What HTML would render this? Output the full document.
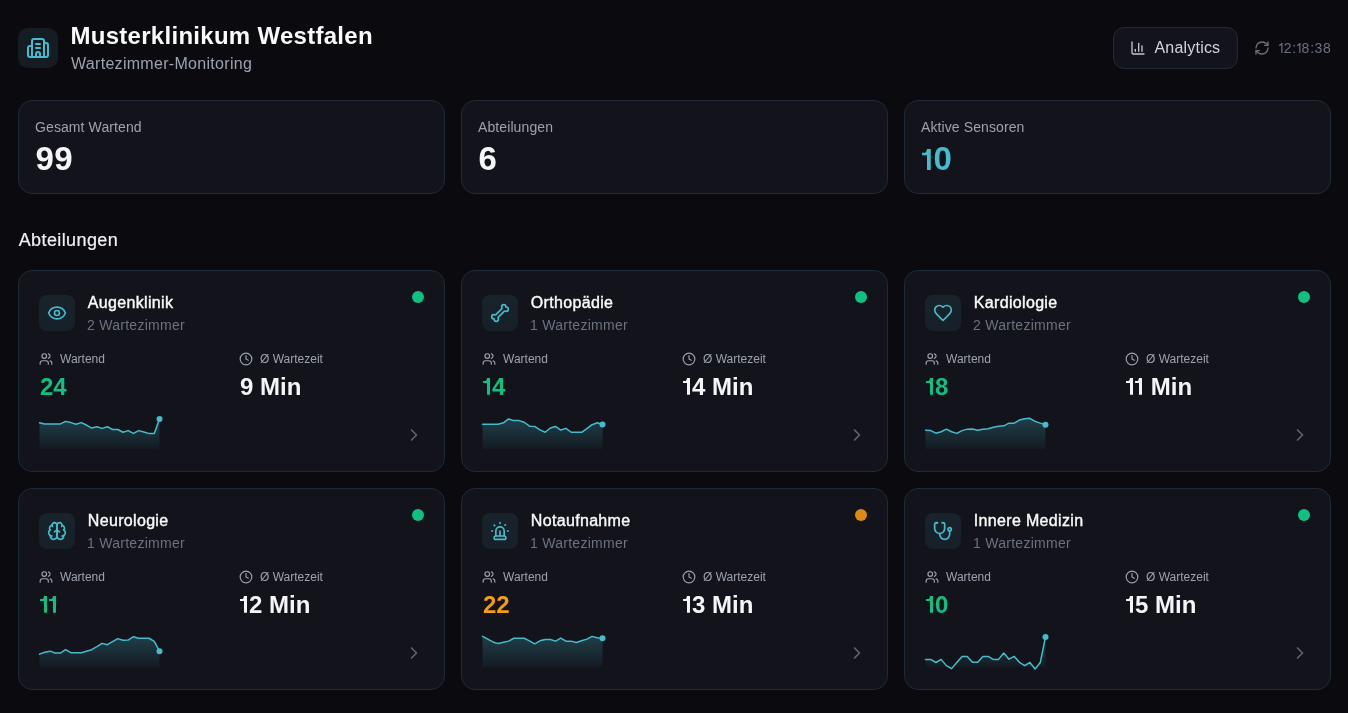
<!DOCTYPE html>
<html lang="de"><head><meta charset="utf-8"><title>Musterklinikum Westfalen</title>
<style>
*{box-sizing:border-box;margin:0;padding:0}
html,body{width:1348px;height:713px;overflow:hidden;background:#0a0a0f;font-family:"Liberation Sans",sans-serif;color:#f5f5f7}
.abs{position:absolute}
.logo{position:absolute;left:18px;top:28px;width:40px;height:40px;border-radius:10px;background:#161c24;display:flex;align-items:center;justify-content:center}
.title{position:absolute;left:70.5px;top:21.6px;font-size:24px;line-height:28px;font-weight:700;letter-spacing:0.28px;white-space:nowrap;color:#fafafa}
.subtitle{position:absolute;left:71px;top:54px;font-size:16px;line-height:20px;letter-spacing:0.3px;white-space:nowrap;color:#9ca3af}
.btn{position:absolute;left:1113px;top:27px;width:125px;height:42px;border:1px solid #1d2b39;border-radius:11px;background:#12131b}
.btn svg{position:absolute;left:16px;top:12px}
.btn span{position:absolute;left:40.5px;top:10px;font-size:16px;line-height:20px;letter-spacing:0.2px;color:#d1d5db;white-space:nowrap}
.refresh{position:absolute;left:1254px;top:40px}
.tch{position:absolute;top:0;width:10px;text-align:center}
.time{position:absolute;left:1279px;top:37.5px;width:60px;height:20px;font-size:14px;line-height:20px;color:#6b7280;white-space:nowrap}
.stat{position:absolute;top:100px;width:427px;height:94px;border:1px solid #1d2b39;border-radius:14px;background:#12131b}
.slab{position:absolute;left:16px;top:16px;font-size:14px;line-height:20px;letter-spacing:0.1px;color:#9ca3af;white-space:nowrap}
.sval{position:absolute;left:16.5px;top:39px;font-size:33px;line-height:38px;letter-spacing:0.5px;font-weight:700;white-space:nowrap}
.sect{position:absolute;left:18.7px;top:228.2px;font-size:18px;line-height:24px;letter-spacing:0.4px;color:#f1f1f3;-webkit-text-stroke:0.2px #f1f1f3;white-space:nowrap}
.dept{position:absolute;width:427px;height:202px;border:1px solid #1d2b39;border-radius:14px;background:#12131b}
.ibox{position:absolute;left:20px;top:24px;width:36px;height:36px;border-radius:8px;background:linear-gradient(180deg,#19232c,#172028);display:flex;align-items:center;justify-content:center}
.dtitle{position:absolute;left:68.8px;top:22px;font-size:16px;line-height:20px;font-weight:400;-webkit-text-stroke:0.4px #fafafa;letter-spacing:0.33px;white-space:nowrap;color:#fafafa}
.dsub{position:absolute;left:68px;top:44px;font-size:14px;line-height:20px;letter-spacing:0.27px;color:#6b7280;white-space:nowrap}
.mlab svg{margin-left:-1px}
.dot{position:absolute;left:393px;top:20px;width:12px;height:12px;border-radius:50%}
.mlab{position:absolute;top:80px;height:16px;display:flex;align-items:center;gap:7px;font-size:12px;color:#9ca3af;white-space:nowrap}
.mval{position:absolute;top:100px;font-size:24px;line-height:32px;font-weight:700;white-space:nowrap}
.spark{position:absolute;left:18.7px;top:139px;overflow:visible}
.chev{position:absolute;left:385px;top:154px;width:20px;height:20px}
.chev svg{display:block}
#wrap{position:absolute;left:0;top:0;width:1348px;height:713px;will-change:transform}
</style></head><body><div id="wrap">
<div class="logo"><svg width="24" height="24" viewBox="0 0 24 24" fill="none" stroke="#45bccc" stroke-width="2" stroke-linecap="round" stroke-linejoin="round" ><path d="M10 12h4"/><path d="M10 8h4"/><path d="M14 21v-3a2 2 0 0 0-4 0v3"/><path d="M6 10H4a2 2 0 0 0-2 2v7a2 2 0 0 0 2 2h16a2 2 0 0 0 2-2V9a2 2 0 0 0-2-2h-2"/><path d="M6 21V5a2 2 0 0 1 2-2h8a2 2 0 0 1 2 2v16"/></svg></div>
<div class="title">Musterklinikum Westfalen</div>
<div class="subtitle">Wartezimmer-Monitoring</div>
<div class="btn"><svg width="16" height="16" viewBox="0 0 24 24" fill="none" stroke="#c4c8d0" stroke-width="2" stroke-linecap="round" stroke-linejoin="round" ><path d="M3 3v16a2 2 0 0 0 2 2h16"/><path d="M18 17V9"/><path d="M13 17V5"/><path d="M8 17v-3"/></svg><span>Analytics</span></div>
<div class="refresh"><svg width="16" height="16" viewBox="0 0 24 24" fill="none" stroke="#6b7280" stroke-width="2" stroke-linecap="round" stroke-linejoin="round" ><path d="M3 12a9 9 0 0 1 9-9 9.75 9.75 0 0 1 6.74 2.74L21 8"/><path d="M21 3v5h-5"/><path d="M21 12a9 9 0 0 1-9 9 9.75 9.75 0 0 1-6.74-2.74L3 16"/><path d="M8 16H3v5"/></svg></div>
<div class="time"><span class="tch" style="left:-3.3px"><svg width="4" height="10" viewBox="0 0 4 10" style="vertical-align:0;margin-left:0.3px"><path d="M2.25,0 H3.45 V10 H2.25 V1.9 Q1.5,2.7 0.1,3 V1.85 Q1.6,1.5 2.3,0 Z" fill="currentColor"/></svg></span><span class="tch" style="left:3.7px">2</span><span class="tch" style="left:10.1px">:</span><span class="tch" style="left:14.5px"><svg width="4" height="10" viewBox="0 0 4 10" style="vertical-align:0;margin-left:0.3px"><path d="M2.25,0 H3.45 V10 H2.25 V1.9 Q1.5,2.7 0.1,3 V1.85 Q1.6,1.5 2.3,0 Z" fill="currentColor"/></svg></span><span class="tch" style="left:21.4px">8</span><span class="tch" style="left:28.1px">:</span><span class="tch" style="left:34.4px">3</span><span class="tch" style="left:42.9px">8</span></div>

<div class="stat" style="left:18px">
  <div class="slab">Gesamt Wartend</div>
  <div class="sval" style="color:#f5f5f7">99</div>
</div>
<div class="stat" style="left:461px">
  <div class="slab">Abteilungen</div>
  <div class="sval" style="color:#f5f5f7">6</div>
</div>
<div class="stat" style="left:904px">
  <div class="slab">Aktive Sensoren</div>
  <div class="sval" style="color:#45bccc"><svg class="one" width="12" height="20.88" viewBox="0 0 9.6 16.7" style="vertical-align:0;margin-left:-0px"><path d="M4,0 H7 V16.7 H4 V4.9 H0.3 Q0,4.9 0,4.6 V3.2 Q0,2.9 0.3,2.9 H2.7 Q3.7,2.4 4,0 Z" fill="currentColor"/></svg>0</div>
</div>
<div class="sect">Abteilungen</div>

<div class="dept" style="left:18px;top:270px">
  <div class="ibox"><svg width="20" height="20" viewBox="0 0 24 24" fill="none" stroke="#45bccc" stroke-width="2" stroke-linecap="round" stroke-linejoin="round" ><path d="M2.062 12.348a1 1 0 0 1 0-.696 10.75 10.75 0 0 1 19.876 0 1 1 0 0 1 0 .696 10.75 10.75 0 0 1-19.876 0"/><circle cx="12" cy="12" r="3"/></svg></div>
  <div class="dtitle">Augenklinik</div>
  <div class="dsub">2 Wartezimmer</div>
  <div class="dot" style="background:#10c081"></div>
  <div class="mlab" style="left:21px"><svg width="14" height="14" viewBox="0 0 24 24" fill="none" stroke="#9ca3af" stroke-width="2" stroke-linecap="round" stroke-linejoin="round" ><path d="M16 21v-2a4 4 0 0 0-4-4H6a4 4 0 0 0-4 4v2"/><circle cx="9" cy="7" r="4"/><path d="M22 21v-2a4 4 0 0 0-3-3.87"/><path d="M16 3.13a4 4 0 0 1 0 7.75"/></svg><span>Wartend</span></div>
  <div class="mlab" style="left:221px"><svg width="14" height="14" viewBox="0 0 24 24" fill="none" stroke="#9ca3af" stroke-width="2" stroke-linecap="round" stroke-linejoin="round" ><circle cx="12" cy="12" r="10"/><polyline points="12 6 12 12 16 14"/></svg><span>Ø Wartezeit</span></div>
  <div class="mval" style="left:21px;color:#10c081">24</div>
  <div class="mval" style="left:221px;color:#f5f5f7">9 Min</div>
  <svg class="spark" width="126" height="44" viewBox="0 0 126 44"><defs><linearGradient id="g0" x1="0" y1="8.92" x2="0" y2="39.3" gradientUnits="userSpaceOnUse"><stop offset="0" stop-color="#45bccc" stop-opacity="0.26"/><stop offset="1" stop-color="#45bccc" stop-opacity="0.04"/></linearGradient></defs><path d="M1.5,39.3 L1.5,12.81 L6.72,13.92 L11.93,13.92 L17.15,13.92 L22.37,13.92 L27.59,11.36 L32.8,12.59 L38.02,14.26 L43.24,12.59 L48.46,15.04 L53.67,18.04 L58.89,16.71 L64.11,18.37 L69.33,16.71 L74.54,19.49 L79.76,19.49 L84.98,22.27 L90.2,20.6 L95.41,23.38 L100.63,20.6 L105.85,22.05 L111.07,23.6 L116.28,23.38 L121.5,8.92 L121.5,39.3 Z" fill="url(#g0)"/><polyline points="1.5,12.81 6.72,13.92 11.93,13.92 17.15,13.92 22.37,13.92 27.59,11.36 32.8,12.59 38.02,14.26 43.24,12.59 48.46,15.04 53.67,18.04 58.89,16.71 64.11,18.37 69.33,16.71 74.54,19.49 79.76,19.49 84.98,22.27 90.2,20.6 95.41,23.38 100.63,20.6 105.85,22.05 111.07,23.6 116.28,23.38 121.5,8.92" fill="none" stroke="#45bccc" stroke-width="1.5" stroke-linejoin="round" stroke-linecap="round"/><circle cx="121.5" cy="8.92" r="3" fill="#45bccc"/></svg>
  <div class="chev"><svg width="20" height="20" viewBox="0 0 24 24" fill="none" stroke="#5f6570" stroke-width="2" stroke-linecap="round" stroke-linejoin="round" ><path d="m9 18 6-6-6-6"/></svg></div>
</div>
<div class="dept" style="left:461px;top:270px">
  <div class="ibox"><svg width="20" height="20" viewBox="0 0 24 24" fill="none" stroke="#45bccc" stroke-width="2" stroke-linecap="round" stroke-linejoin="round" ><path d="M17 10c.7-.7 1.69 0 2.5 0a2.5 2.5 0 1 0 0-5 .5.5 0 0 1-.5-.5 2.5 2.5 0 1 0-5 0c0 .81.7 1.8 0 2.5l-7 7c-.7.7-1.69 0-2.5 0a2.5 2.5 0 0 0 0 5c.28 0 .5.22.5.5a2.5 2.5 0 1 0 5 0c0-.81-.7-1.8 0-2.5Z"/></svg></div>
  <div class="dtitle">Orthopädie</div>
  <div class="dsub">1 Wartezimmer</div>
  <div class="dot" style="background:#10c081"></div>
  <div class="mlab" style="left:21px"><svg width="14" height="14" viewBox="0 0 24 24" fill="none" stroke="#9ca3af" stroke-width="2" stroke-linecap="round" stroke-linejoin="round" ><path d="M16 21v-2a4 4 0 0 0-4-4H6a4 4 0 0 0-4 4v2"/><circle cx="9" cy="7" r="4"/><path d="M22 21v-2a4 4 0 0 0-3-3.87"/><path d="M16 3.13a4 4 0 0 1 0 7.75"/></svg><span>Wartend</span></div>
  <div class="mlab" style="left:221px"><svg width="14" height="14" viewBox="0 0 24 24" fill="none" stroke="#9ca3af" stroke-width="2" stroke-linecap="round" stroke-linejoin="round" ><circle cx="12" cy="12" r="10"/><polyline points="12 6 12 12 16 14"/></svg><span>Ø Wartezeit</span></div>
  <div class="mval" style="left:21px;color:#10c081"><svg class="one" width="9.1" height="16.7" viewBox="0 0 9.1 16.7" style="vertical-align:0;margin-left:-0px"><path d="M4,0 H7 V16.7 H4 V4.9 H0.3 Q0,4.9 0,4.6 V3.2 Q0,2.9 0.3,2.9 H2.7 Q3.7,2.4 4,0 Z" fill="currentColor"/></svg>4</div>
  <div class="mval" style="left:221px;color:#f5f5f7"><svg class="one" width="9.1" height="16.7" viewBox="0 0 9.1 16.7" style="vertical-align:0;margin-left:-0px"><path d="M4,0 H7 V16.7 H4 V4.9 H0.3 Q0,4.9 0,4.6 V3.2 Q0,2.9 0.3,2.9 H2.7 Q3.7,2.4 4,0 Z" fill="currentColor"/></svg>4 Min</div>
  <svg class="spark" width="126" height="44" viewBox="0 0 126 44"><defs><linearGradient id="g1" x1="0" y1="8.92" x2="0" y2="39.3" gradientUnits="userSpaceOnUse"><stop offset="0" stop-color="#45bccc" stop-opacity="0.26"/><stop offset="1" stop-color="#45bccc" stop-opacity="0.04"/></linearGradient></defs><path d="M1.5,39.3 L1.5,14.26 L6.72,14.26 L11.93,14.26 L17.15,14.26 L22.37,12.81 L27.59,8.92 L32.8,10.59 L38.02,10.59 L43.24,12.25 L48.46,16.15 L53.67,16.48 L58.89,19.82 L64.11,22.27 L69.33,18.04 L74.54,16.48 L79.76,20.04 L84.98,18.37 L90.2,22.27 L95.41,22.27 L100.63,22.27 L105.85,18.71 L111.07,14.7 L116.28,12.81 L121.5,14.48 L121.5,39.3 Z" fill="url(#g1)"/><polyline points="1.5,14.26 6.72,14.26 11.93,14.26 17.15,14.26 22.37,12.81 27.59,8.92 32.8,10.59 38.02,10.59 43.24,12.25 48.46,16.15 53.67,16.48 58.89,19.82 64.11,22.27 69.33,18.04 74.54,16.48 79.76,20.04 84.98,18.37 90.2,22.27 95.41,22.27 100.63,22.27 105.85,18.71 111.07,14.7 116.28,12.81 121.5,14.48" fill="none" stroke="#45bccc" stroke-width="1.5" stroke-linejoin="round" stroke-linecap="round"/><circle cx="121.5" cy="14.48" r="3" fill="#45bccc"/></svg>
  <div class="chev"><svg width="20" height="20" viewBox="0 0 24 24" fill="none" stroke="#5f6570" stroke-width="2" stroke-linecap="round" stroke-linejoin="round" ><path d="m9 18 6-6-6-6"/></svg></div>
</div>
<div class="dept" style="left:904px;top:270px">
  <div class="ibox"><svg width="20" height="20" viewBox="0 0 24 24" fill="none" stroke="#45bccc" stroke-width="2" stroke-linecap="round" stroke-linejoin="round" ><path d="M19 14c1.49-1.46 3-3.21 3-5.5A5.5 5.5 0 0 0 16.5 3c-1.76 0-3 .5-4.5 2-1.5-1.5-2.74-2-4.5-2A5.5 5.5 0 0 0 2 8.5c0 2.3 1.5 4.05 3 5.5l7 7Z"/></svg></div>
  <div class="dtitle">Kardiologie</div>
  <div class="dsub">2 Wartezimmer</div>
  <div class="dot" style="background:#10c081"></div>
  <div class="mlab" style="left:21px"><svg width="14" height="14" viewBox="0 0 24 24" fill="none" stroke="#9ca3af" stroke-width="2" stroke-linecap="round" stroke-linejoin="round" ><path d="M16 21v-2a4 4 0 0 0-4-4H6a4 4 0 0 0-4 4v2"/><circle cx="9" cy="7" r="4"/><path d="M22 21v-2a4 4 0 0 0-3-3.87"/><path d="M16 3.13a4 4 0 0 1 0 7.75"/></svg><span>Wartend</span></div>
  <div class="mlab" style="left:221px"><svg width="14" height="14" viewBox="0 0 24 24" fill="none" stroke="#9ca3af" stroke-width="2" stroke-linecap="round" stroke-linejoin="round" ><circle cx="12" cy="12" r="10"/><polyline points="12 6 12 12 16 14"/></svg><span>Ø Wartezeit</span></div>
  <div class="mval" style="left:21px;color:#10c081"><svg class="one" width="9.1" height="16.7" viewBox="0 0 9.1 16.7" style="vertical-align:0;margin-left:-0px"><path d="M4,0 H7 V16.7 H4 V4.9 H0.3 Q0,4.9 0,4.6 V3.2 Q0,2.9 0.3,2.9 H2.7 Q3.7,2.4 4,0 Z" fill="currentColor"/></svg>8</div>
  <div class="mval" style="left:221px;color:#f5f5f7"><svg class="one" width="9.1" height="16.7" viewBox="0 0 9.1 16.7" style="vertical-align:0;margin-left:-0px"><path d="M4,0 H7 V16.7 H4 V4.9 H0.3 Q0,4.9 0,4.6 V3.2 Q0,2.9 0.3,2.9 H2.7 Q3.7,2.4 4,0 Z" fill="currentColor"/></svg><svg class="one" width="9.1" height="16.7" viewBox="0 0 9.1 16.7" style="vertical-align:0;margin-left:-0px"><path d="M4,0 H7 V16.7 H4 V4.9 H0.3 Q0,4.9 0,4.6 V3.2 Q0,2.9 0.3,2.9 H2.7 Q3.7,2.4 4,0 Z" fill="currentColor"/></svg> Min</div>
  <svg class="spark" width="126" height="44" viewBox="0 0 126 44"><defs><linearGradient id="g2" x1="0" y1="8.36" x2="0" y2="39.3" gradientUnits="userSpaceOnUse"><stop offset="0" stop-color="#45bccc" stop-opacity="0.26"/><stop offset="1" stop-color="#45bccc" stop-opacity="0.04"/></linearGradient></defs><path d="M1.5,39.3 L1.5,20.27 L6.72,20.6 L11.93,23.16 L17.15,21.71 L22.37,19.15 L27.59,21.71 L32.8,23.38 L38.02,20.6 L43.24,19.15 L48.46,18.93 L53.67,20.27 L58.89,19.15 L64.11,18.71 L69.33,17.26 L74.54,16.15 L79.76,15.82 L84.98,13.14 L90.2,13.14 L95.41,10.03 L100.63,8.69 L105.85,8.36 L111.07,11.36 L116.28,13.14 L121.5,14.7 L121.5,39.3 Z" fill="url(#g2)"/><polyline points="1.5,20.27 6.72,20.6 11.93,23.16 17.15,21.71 22.37,19.15 27.59,21.71 32.8,23.38 38.02,20.6 43.24,19.15 48.46,18.93 53.67,20.27 58.89,19.15 64.11,18.71 69.33,17.26 74.54,16.15 79.76,15.82 84.98,13.14 90.2,13.14 95.41,10.03 100.63,8.69 105.85,8.36 111.07,11.36 116.28,13.14 121.5,14.7" fill="none" stroke="#45bccc" stroke-width="1.5" stroke-linejoin="round" stroke-linecap="round"/><circle cx="121.5" cy="14.7" r="3" fill="#45bccc"/></svg>
  <div class="chev"><svg width="20" height="20" viewBox="0 0 24 24" fill="none" stroke="#5f6570" stroke-width="2" stroke-linecap="round" stroke-linejoin="round" ><path d="m9 18 6-6-6-6"/></svg></div>
</div>
<div class="dept" style="left:18px;top:488px">
  <div class="ibox"><svg width="20" height="20" viewBox="0 0 24 24" fill="none" stroke="#45bccc" stroke-width="2" stroke-linecap="round" stroke-linejoin="round" ><path d="M12 5a3 3 0 1 0-5.997.125 4 4 0 0 0-2.526 5.77 4 4 0 0 0 .556 6.588A4 4 0 1 0 12 18Z"/><path d="M12 5a3 3 0 1 1 5.997.125 4 4 0 0 1 2.526 5.77 4 4 0 0 1-.556 6.588A4 4 0 1 1 12 18Z"/><path d="M15 13a4.5 4.5 0 0 1-3-4 4.5 4.5 0 0 1-3 4"/><path d="M17.599 6.5a3 3 0 0 0 .399-1.375"/><path d="M6.003 5.125A3 3 0 0 0 6.401 6.5"/><path d="M3.477 10.896a4 4 0 0 1 .585-.396"/><path d="M19.938 10.5a4 4 0 0 1 .585.396"/><path d="M6 18a4 4 0 0 1-1.967-.516"/><path d="M19.967 17.484A4 4 0 0 1 18 18"/></svg></div>
  <div class="dtitle">Neurologie</div>
  <div class="dsub">1 Wartezimmer</div>
  <div class="dot" style="background:#10c081"></div>
  <div class="mlab" style="left:21px"><svg width="14" height="14" viewBox="0 0 24 24" fill="none" stroke="#9ca3af" stroke-width="2" stroke-linecap="round" stroke-linejoin="round" ><path d="M16 21v-2a4 4 0 0 0-4-4H6a4 4 0 0 0-4 4v2"/><circle cx="9" cy="7" r="4"/><path d="M22 21v-2a4 4 0 0 0-3-3.87"/><path d="M16 3.13a4 4 0 0 1 0 7.75"/></svg><span>Wartend</span></div>
  <div class="mlab" style="left:221px"><svg width="14" height="14" viewBox="0 0 24 24" fill="none" stroke="#9ca3af" stroke-width="2" stroke-linecap="round" stroke-linejoin="round" ><circle cx="12" cy="12" r="10"/><polyline points="12 6 12 12 16 14"/></svg><span>Ø Wartezeit</span></div>
  <div class="mval" style="left:21px;color:#10c081"><svg class="one" width="9.1" height="16.7" viewBox="0 0 9.1 16.7" style="vertical-align:0;margin-left:-0px"><path d="M4,0 H7 V16.7 H4 V4.9 H0.3 Q0,4.9 0,4.6 V3.2 Q0,2.9 0.3,2.9 H2.7 Q3.7,2.4 4,0 Z" fill="currentColor"/></svg><svg class="one" width="9.1" height="16.7" viewBox="0 0 9.1 16.7" style="vertical-align:0;margin-left:-0px"><path d="M4,0 H7 V16.7 H4 V4.9 H0.3 Q0,4.9 0,4.6 V3.2 Q0,2.9 0.3,2.9 H2.7 Q3.7,2.4 4,0 Z" fill="currentColor"/></svg></div>
  <div class="mval" style="left:221px;color:#f5f5f7"><svg class="one" width="9.1" height="16.7" viewBox="0 0 9.1 16.7" style="vertical-align:0;margin-left:-0px"><path d="M4,0 H7 V16.7 H4 V4.9 H0.3 Q0,4.9 0,4.6 V3.2 Q0,2.9 0.3,2.9 H2.7 Q3.7,2.4 4,0 Z" fill="currentColor"/></svg>2 Min</div>
  <svg class="spark" width="126" height="44" viewBox="0 0 126 44"><defs><linearGradient id="g3" x1="0" y1="8.69" x2="0" y2="39.3" gradientUnits="userSpaceOnUse"><stop offset="0" stop-color="#45bccc" stop-opacity="0.26"/><stop offset="1" stop-color="#45bccc" stop-opacity="0.04"/></linearGradient></defs><path d="M1.5,39.3 L1.5,26.16 L6.72,24.27 L11.93,23.16 L17.15,25.05 L22.37,25.05 L27.59,21.71 L32.8,24.72 L38.02,24.72 L43.24,24.72 L48.46,23.16 L53.67,21.71 L58.89,18.71 L64.11,15.37 L69.33,16.71 L74.54,13.59 L79.76,10.59 L84.98,12.25 L90.2,12.03 L95.41,8.69 L100.63,10.25 L105.85,10.25 L111.07,10.25 L116.28,13.37 L121.5,23.16 L121.5,39.3 Z" fill="url(#g3)"/><polyline points="1.5,26.16 6.72,24.27 11.93,23.16 17.15,25.05 22.37,25.05 27.59,21.71 32.8,24.72 38.02,24.72 43.24,24.72 48.46,23.16 53.67,21.71 58.89,18.71 64.11,15.37 69.33,16.71 74.54,13.59 79.76,10.59 84.98,12.25 90.2,12.03 95.41,8.69 100.63,10.25 105.85,10.25 111.07,10.25 116.28,13.37 121.5,23.16" fill="none" stroke="#45bccc" stroke-width="1.5" stroke-linejoin="round" stroke-linecap="round"/><circle cx="121.5" cy="23.16" r="3" fill="#45bccc"/></svg>
  <div class="chev"><svg width="20" height="20" viewBox="0 0 24 24" fill="none" stroke="#5f6570" stroke-width="2" stroke-linecap="round" stroke-linejoin="round" ><path d="m9 18 6-6-6-6"/></svg></div>
</div>
<div class="dept" style="left:461px;top:488px">
  <div class="ibox"><svg width="20" height="20" viewBox="0 0 24 24" fill="none" stroke="#45bccc" stroke-width="2" stroke-linecap="round" stroke-linejoin="round" ><path d="M7 18v-6a5 5 0 1 1 10 0v6"/><path d="M5 21a1 1 0 0 0 1 1h12a1 1 0 0 0 1-1v-1a2 2 0 0 0-2-2H7a2 2 0 0 0-2 2z"/><path d="M21 12h1"/><path d="M18.5 4.5 18 5"/><path d="M2 12h1"/><path d="M12 2v1"/><path d="m4.929 4.929.707.707"/><path d="M12 12v6"/></svg></div>
  <div class="dtitle">Notaufnahme</div>
  <div class="dsub">1 Wartezimmer</div>
  <div class="dot" style="background:#dc8a12"></div>
  <div class="mlab" style="left:21px"><svg width="14" height="14" viewBox="0 0 24 24" fill="none" stroke="#9ca3af" stroke-width="2" stroke-linecap="round" stroke-linejoin="round" ><path d="M16 21v-2a4 4 0 0 0-4-4H6a4 4 0 0 0-4 4v2"/><circle cx="9" cy="7" r="4"/><path d="M22 21v-2a4 4 0 0 0-3-3.87"/><path d="M16 3.13a4 4 0 0 1 0 7.75"/></svg><span>Wartend</span></div>
  <div class="mlab" style="left:221px"><svg width="14" height="14" viewBox="0 0 24 24" fill="none" stroke="#9ca3af" stroke-width="2" stroke-linecap="round" stroke-linejoin="round" ><circle cx="12" cy="12" r="10"/><polyline points="12 6 12 12 16 14"/></svg><span>Ø Wartezeit</span></div>
  <div class="mval" style="left:21px;color:#f59e0b">22</div>
  <div class="mval" style="left:221px;color:#f5f5f7"><svg class="one" width="9.1" height="16.7" viewBox="0 0 9.1 16.7" style="vertical-align:0;margin-left:-0px"><path d="M4,0 H7 V16.7 H4 V4.9 H0.3 Q0,4.9 0,4.6 V3.2 Q0,2.9 0.3,2.9 H2.7 Q3.7,2.4 4,0 Z" fill="currentColor"/></svg>3 Min</div>
  <svg class="spark" width="126" height="44" viewBox="0 0 126 44"><defs><linearGradient id="g4" x1="0" y1="8.36" x2="0" y2="39.3" gradientUnits="userSpaceOnUse"><stop offset="0" stop-color="#45bccc" stop-opacity="0.26"/><stop offset="1" stop-color="#45bccc" stop-opacity="0.04"/></linearGradient></defs><path d="M1.5,39.3 L1.5,8.36 L6.72,11.14 L11.93,13.92 L17.15,15.59 L22.37,14.26 L27.59,13.14 L32.8,10.25 L38.02,10.25 L43.24,10.25 L48.46,12.81 L53.67,15.82 L58.89,12.81 L64.11,11.48 L69.33,11.48 L74.54,13.14 L79.76,10.03 L84.98,13.14 L90.2,13.14 L95.41,14.48 L100.63,12.81 L105.85,11.14 L111.07,8.36 L116.28,9.81 L121.5,10.25 L121.5,39.3 Z" fill="url(#g4)"/><polyline points="1.5,8.36 6.72,11.14 11.93,13.92 17.15,15.59 22.37,14.26 27.59,13.14 32.8,10.25 38.02,10.25 43.24,10.25 48.46,12.81 53.67,15.82 58.89,12.81 64.11,11.48 69.33,11.48 74.54,13.14 79.76,10.03 84.98,13.14 90.2,13.14 95.41,14.48 100.63,12.81 105.85,11.14 111.07,8.36 116.28,9.81 121.5,10.25" fill="none" stroke="#45bccc" stroke-width="1.5" stroke-linejoin="round" stroke-linecap="round"/><circle cx="121.5" cy="10.25" r="3" fill="#45bccc"/></svg>
  <div class="chev"><svg width="20" height="20" viewBox="0 0 24 24" fill="none" stroke="#5f6570" stroke-width="2" stroke-linecap="round" stroke-linejoin="round" ><path d="m9 18 6-6-6-6"/></svg></div>
</div>
<div class="dept" style="left:904px;top:488px">
  <div class="ibox"><svg width="20" height="20" viewBox="0 0 24 24" fill="none" stroke="#45bccc" stroke-width="2" stroke-linecap="round" stroke-linejoin="round" ><path d="M4.8 2.3A.3.3 0 1 0 5 2H4a2 2 0 0 0-2 2v5a6 6 0 0 0 6 6v0a6 6 0 0 0 6-6V4a2 2 0 0 0-2-2h-1a.2.2 0 1 0 .3.3"/><path d="M8 15v1a6 6 0 0 0 6 6v0a6 6 0 0 0 6-6v-4"/><circle cx="20" cy="10" r="2"/></svg></div>
  <div class="dtitle">Innere Medizin</div>
  <div class="dsub">1 Wartezimmer</div>
  <div class="dot" style="background:#10c081"></div>
  <div class="mlab" style="left:21px"><svg width="14" height="14" viewBox="0 0 24 24" fill="none" stroke="#9ca3af" stroke-width="2" stroke-linecap="round" stroke-linejoin="round" ><path d="M16 21v-2a4 4 0 0 0-4-4H6a4 4 0 0 0-4 4v2"/><circle cx="9" cy="7" r="4"/><path d="M22 21v-2a4 4 0 0 0-3-3.87"/><path d="M16 3.13a4 4 0 0 1 0 7.75"/></svg><span>Wartend</span></div>
  <div class="mlab" style="left:221px"><svg width="14" height="14" viewBox="0 0 24 24" fill="none" stroke="#9ca3af" stroke-width="2" stroke-linecap="round" stroke-linejoin="round" ><circle cx="12" cy="12" r="10"/><polyline points="12 6 12 12 16 14"/></svg><span>Ø Wartezeit</span></div>
  <div class="mval" style="left:21px;color:#10c081"><svg class="one" width="9.1" height="16.7" viewBox="0 0 9.1 16.7" style="vertical-align:0;margin-left:-0px"><path d="M4,0 H7 V16.7 H4 V4.9 H0.3 Q0,4.9 0,4.6 V3.2 Q0,2.9 0.3,2.9 H2.7 Q3.7,2.4 4,0 Z" fill="currentColor"/></svg>0</div>
  <div class="mval" style="left:221px;color:#f5f5f7"><svg class="one" width="9.1" height="16.7" viewBox="0 0 9.1 16.7" style="vertical-align:0;margin-left:-0px"><path d="M4,0 H7 V16.7 H4 V4.9 H0.3 Q0,4.9 0,4.6 V3.2 Q0,2.9 0.3,2.9 H2.7 Q3.7,2.4 4,0 Z" fill="currentColor"/></svg>5 Min</div>
  <svg class="spark" width="126" height="44" viewBox="0 0 126 44"><defs><linearGradient id="g5" x1="0" y1="8.92" x2="0" y2="39.3" gradientUnits="userSpaceOnUse"><stop offset="0" stop-color="#45bccc" stop-opacity="0.26"/><stop offset="1" stop-color="#45bccc" stop-opacity="0.04"/></linearGradient></defs><path d="M1.5,39.3 L1.5,31.39 L6.72,31.39 L11.93,34.51 L17.15,31.39 L22.37,37.62 L27.59,40.63 L32.8,34.51 L38.02,28.39 L43.24,28.39 L48.46,34.29 L53.67,34.29 L58.89,28.39 L64.11,28.39 L69.33,31.39 L74.54,31.39 L79.76,25.05 L84.98,31.17 L90.2,28.39 L95.41,34.29 L100.63,37.62 L105.85,34.51 L111.07,40.96 L116.28,34.51 L121.5,8.92 L121.5,39.3 Z" fill="url(#g5)"/><polyline points="1.5,31.39 6.72,31.39 11.93,34.51 17.15,31.39 22.37,37.62 27.59,40.63 32.8,34.51 38.02,28.39 43.24,28.39 48.46,34.29 53.67,34.29 58.89,28.39 64.11,28.39 69.33,31.39 74.54,31.39 79.76,25.05 84.98,31.17 90.2,28.39 95.41,34.29 100.63,37.62 105.85,34.51 111.07,40.96 116.28,34.51 121.5,8.92" fill="none" stroke="#45bccc" stroke-width="1.5" stroke-linejoin="round" stroke-linecap="round"/><circle cx="121.5" cy="8.92" r="3" fill="#45bccc"/></svg>
  <div class="chev"><svg width="20" height="20" viewBox="0 0 24 24" fill="none" stroke="#5f6570" stroke-width="2" stroke-linecap="round" stroke-linejoin="round" ><path d="m9 18 6-6-6-6"/></svg></div>
</div>
</div></body></html>
